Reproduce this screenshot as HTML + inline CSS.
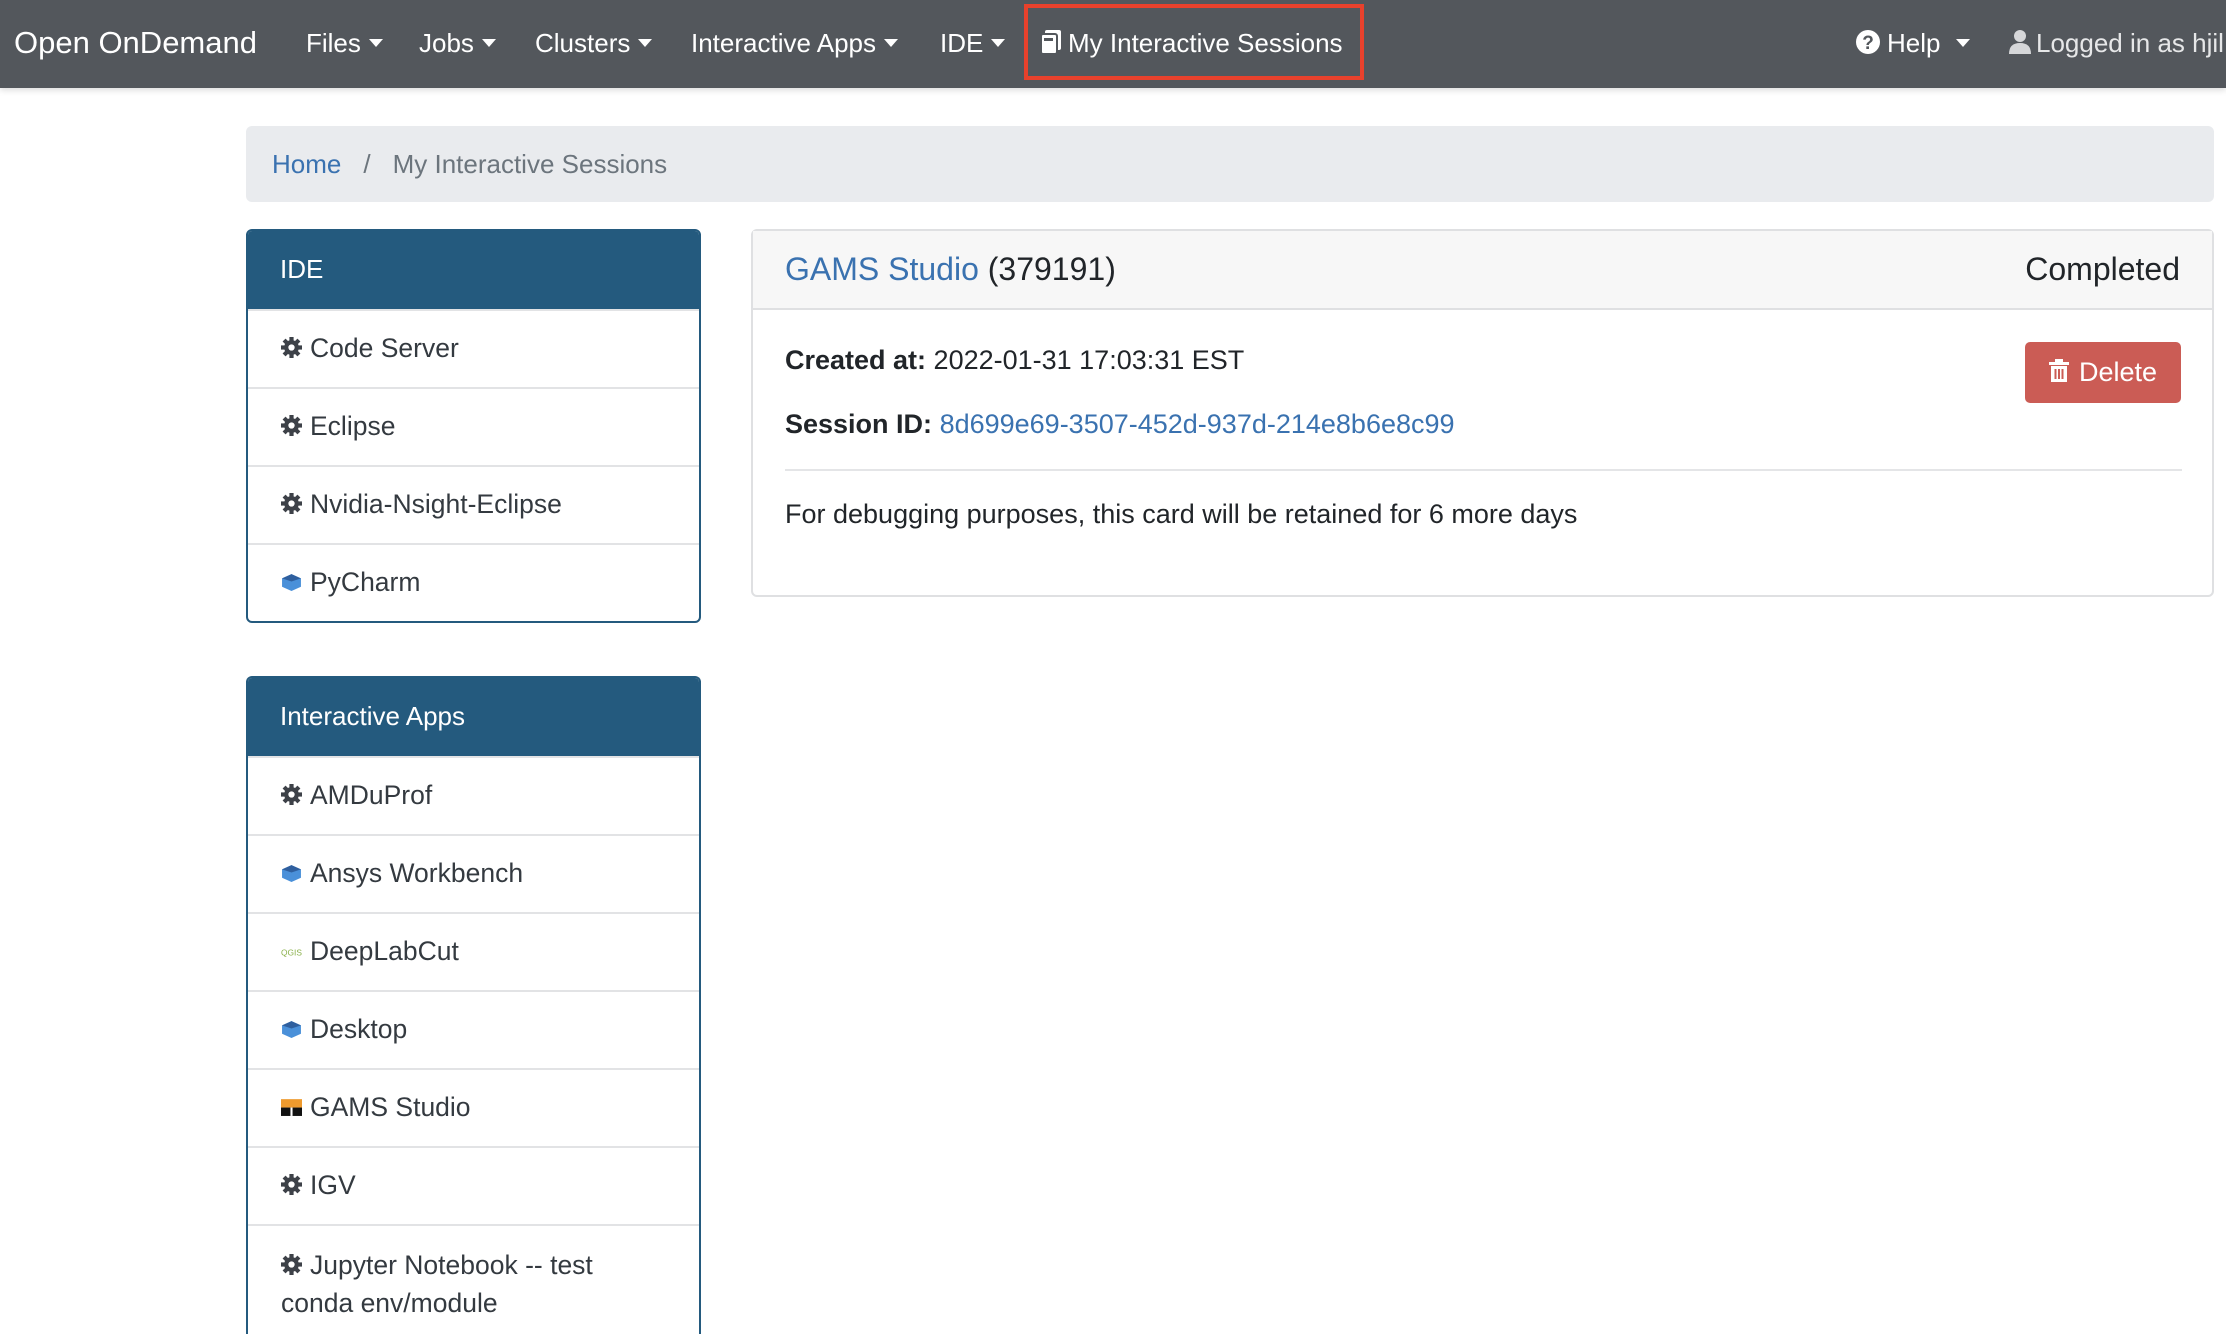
<!DOCTYPE html>
<html><head><meta charset="utf-8"><style>
*{box-sizing:border-box;margin:0;padding:0}
html{width:2226px;height:1334px;overflow:hidden}
body{width:2226px;height:1334px;overflow:hidden;background:#fff;font-family:"Liberation Sans",Arial,sans-serif;color:#212529;position:relative}
.nav{position:absolute;left:0;top:0;width:2226px;height:88px;background:#53575c;box-shadow:0 2px 6px rgba(0,0,0,.15)}
.nav span{position:absolute;top:0;line-height:86px;color:#fff;font-size:26px;white-space:nowrap}
.car{display:inline-block;width:0;height:0;border-left:7px solid transparent;border-right:7px solid transparent;border-top:8px solid #fff;vertical-align:middle;margin-left:8px;margin-top:-4px}
.bc{position:absolute;left:246px;top:126px;width:1968px;height:76px;background:#e9ebee;border-radius:6px;font-size:26px;line-height:76px;padding-left:26px;color:#6c757d}
a{color:#3a72b0;text-decoration:none}
.card{position:absolute;left:246px;width:455px;border:2px solid #245a7e;border-radius:6px;overflow:hidden;background:#fff}
.card .h{background:#245a7e;color:#fff;font-size:26px;height:78px;line-height:76px;padding-left:32px}
.card .r{height:78px;line-height:74px;border-top:2px solid #e2e3e5;padding-left:33px;font-size:26.5px;color:#343a40;white-space:nowrap}
.card .r:first-of-type{border-top:none}
.ic{display:inline-block;width:21px;height:21px;vertical-align:middle;margin-right:8px;margin-top:-5px}
.main{position:absolute;left:751px;top:229px;width:1463px;height:368px;border:2px solid #dfe0e2;border-radius:6px;background:#fff}
.mh{height:79px;background:#f7f7f7;border-bottom:2px solid #dfe0e2;font-size:32px;line-height:77px;padding:0 32px}
.t{position:absolute;font-size:27px;white-space:nowrap}
</style></head><body>
<div class="nav">
<span style="left:14px;font-size:31px">Open OnDemand</span>
<span style="left:306px">Files<i class="car"></i></span>
<span style="left:419px">Jobs<i class="car"></i></span>
<span style="left:535px">Clusters<i class="car"></i></span>
<span style="left:691px">Interactive Apps<i class="car"></i></span>
<span style="left:940px">IDE<i class="car"></i></span>
<div style="position:absolute;left:1024px;top:4px;width:340px;height:76px;border:4px solid #e8412c"></div>
<span style="left:1040px"><svg width="22" height="26" viewBox="0 0 22 26" style="vertical-align:middle;margin-top:-6px;margin-right:6px"><rect x="5" y="1" width="16" height="20" rx="2" fill="#fff"/><rect x="1" y="5" width="16" height="20" rx="2" fill="#fff" stroke="#53575c" stroke-width="2"/><rect x="4" y="9" width="9" height="3" fill="#53575c"/></svg>My Interactive Sessions</span>
<span style="left:1855px"><svg width="26" height="26" viewBox="0 0 26 26" style="vertical-align:middle;margin-top:-6px;margin-right:6px"><circle cx="13" cy="13" r="12" fill="#fff"/><text x="13" y="20" text-anchor="middle" font-size="19" font-weight="bold" fill="#53575c" font-family="Liberation Sans">?</text></svg>Help<i class="car" style="margin-left:16px"></i></span>
<span style="left:2008px;color:#e6e7e8"><svg width="24" height="26" viewBox="0 0 24 26" style="vertical-align:middle;margin-top:-6px;margin-right:4px"><circle cx="12" cy="7" r="6" fill="#d6d7d9"/><path d="M1 25 Q1 14 12 14 Q23 14 23 25 Z" fill="#d6d7d9"/></svg>Logged in as hjil</span>
</div>
<div class="bc"><a>Home</a><span style="margin:0 22px">/</span>My Interactive Sessions</div>

<div class="card" style="top:229px;height:394px">
<div class="h">IDE</div>
<div class="r"><svg class="ic" viewBox="0 0 20 20"><g fill="#3d4148"><circle cx="10" cy="10" r="7"/><rect x="8" y="0" width="4" height="20"/><rect x="0" y="8" width="20" height="4"/><rect x="8" y="0" width="4" height="20" transform="rotate(45 10 10)"/><rect x="8" y="0" width="4" height="20" transform="rotate(-45 10 10)"/></g><circle cx="10" cy="10" r="3" fill="#fff"/></svg>Code Server</div>
<div class="r"><svg class="ic" viewBox="0 0 20 20"><g fill="#3d4148"><circle cx="10" cy="10" r="7"/><rect x="8" y="0" width="4" height="20"/><rect x="0" y="8" width="20" height="4"/><rect x="8" y="0" width="4" height="20" transform="rotate(45 10 10)"/><rect x="8" y="0" width="4" height="20" transform="rotate(-45 10 10)"/></g><circle cx="10" cy="10" r="3" fill="#fff"/></svg>Eclipse</div>
<div class="r"><svg class="ic" viewBox="0 0 20 20"><g fill="#3d4148"><circle cx="10" cy="10" r="7"/><rect x="8" y="0" width="4" height="20"/><rect x="0" y="8" width="20" height="4"/><rect x="8" y="0" width="4" height="20" transform="rotate(45 10 10)"/><rect x="8" y="0" width="4" height="20" transform="rotate(-45 10 10)"/></g><circle cx="10" cy="10" r="3" fill="#fff"/></svg>Nvidia-Nsight-Eclipse</div>
<div class="r"><svg class="ic" viewBox="0 0 20 20"><path d="M10 3 L19 7 L19 15 L10 19 L1 15 L1 7 Z" fill="#4a90d9"/><path d="M1 7 L10 3 L19 7 L10 10 Z" fill="#2f5f9e"/></svg>PyCharm</div>
</div>

<div class="card" style="top:676px;height:658px;border-bottom:none;border-radius:6px 6px 0 0">
<div class="h">Interactive Apps</div>
<div class="r"><svg class="ic" viewBox="0 0 20 20"><g fill="#3d4148"><circle cx="10" cy="10" r="7"/><rect x="8" y="0" width="4" height="20"/><rect x="0" y="8" width="20" height="4"/><rect x="8" y="0" width="4" height="20" transform="rotate(45 10 10)"/><rect x="8" y="0" width="4" height="20" transform="rotate(-45 10 10)"/></g><circle cx="10" cy="10" r="3" fill="#fff"/></svg>AMDuProf</div>
<div class="r"><svg class="ic" viewBox="0 0 20 20"><path d="M10 3 L19 7 L19 15 L10 19 L1 15 L1 7 Z" fill="#4a90d9"/><path d="M1 7 L10 3 L19 7 L10 10 Z" fill="#2f5f9e"/></svg>Ansys Workbench</div>
<div class="r"><svg class="ic" viewBox="0 0 20 20"><text x="10" y="15" text-anchor="middle" font-size="8" fill="#8ab04a" font-family="Liberation Sans">QGIS</text></svg>DeepLabCut</div>
<div class="r"><svg class="ic" viewBox="0 0 20 20"><path d="M10 3 L19 7 L19 15 L10 19 L1 15 L1 7 Z" fill="#4a90d9"/><path d="M1 7 L10 3 L19 7 L10 10 Z" fill="#2f5f9e"/></svg>Desktop</div>
<div class="r"><svg class="ic" viewBox="0 0 20 20"><rect x="0" y="3" width="20" height="8" fill="#ee9a2e"/><rect x="0" y="11" width="20" height="8" fill="#111"/><rect x="9" y="11" width="2" height="8" fill="#fff"/></svg>GAMS Studio</div>
<div class="r"><svg class="ic" viewBox="0 0 20 20"><g fill="#3d4148"><circle cx="10" cy="10" r="7"/><rect x="8" y="0" width="4" height="20"/><rect x="0" y="8" width="20" height="4"/><rect x="8" y="0" width="4" height="20" transform="rotate(45 10 10)"/><rect x="8" y="0" width="4" height="20" transform="rotate(-45 10 10)"/></g><circle cx="10" cy="10" r="3" fill="#fff"/></svg>IGV</div>
<div class="r" style="height:150px;line-height:38px;padding-top:20px;white-space:normal"><svg class="ic" viewBox="0 0 20 20"><g fill="#3d4148"><circle cx="10" cy="10" r="7"/><rect x="8" y="0" width="4" height="20"/><rect x="0" y="8" width="20" height="4"/><rect x="8" y="0" width="4" height="20" transform="rotate(45 10 10)"/><rect x="8" y="0" width="4" height="20" transform="rotate(-45 10 10)"/></g><circle cx="10" cy="10" r="3" fill="#fff"/></svg>Jupyter Notebook -- test<br>conda env/module</div>
</div>

<div class="main">
<div class="mh"><a>GAMS Studio</a> (379191)<span style="float:right">Completed</span></div>
<div class="t" style="left:32px;top:114px"><b>Created at:</b> 2022-01-31 17:03:31 EST</div>
<div class="t" style="left:32px;top:178px"><b>Session ID:</b> <a>8d699e69-3507-452d-937d-214e8b6e8c99</a></div>
<div style="position:absolute;left:32px;top:238px;width:1397px;height:2px;background:#e4e5e7"></div>
<div class="t" style="left:32px;top:268px">For debugging purposes, this card will be retained for 6 more days</div>
<div style="position:absolute;left:1272px;top:111px;width:156px;height:61px;background:#cb5c55;border-radius:5px;color:#fff;font-size:27px;line-height:61px;text-align:center"><svg width="20" height="24" viewBox="0 0 20 24" style="vertical-align:middle;margin-top:-5px;margin-right:10px"><rect x="0" y="3" width="20" height="3" fill="#fff"/><rect x="6" y="0" width="8" height="3" fill="#fff"/><path d="M2 7 H18 V23 H2 Z" fill="#fff"/><rect x="5.5" y="10" width="2" height="10" fill="#cb5c55"/><rect x="9" y="10" width="2" height="10" fill="#cb5c55"/><rect x="12.5" y="10" width="2" height="10" fill="#cb5c55"/></svg>Delete</div>
</div>
</body></html>
